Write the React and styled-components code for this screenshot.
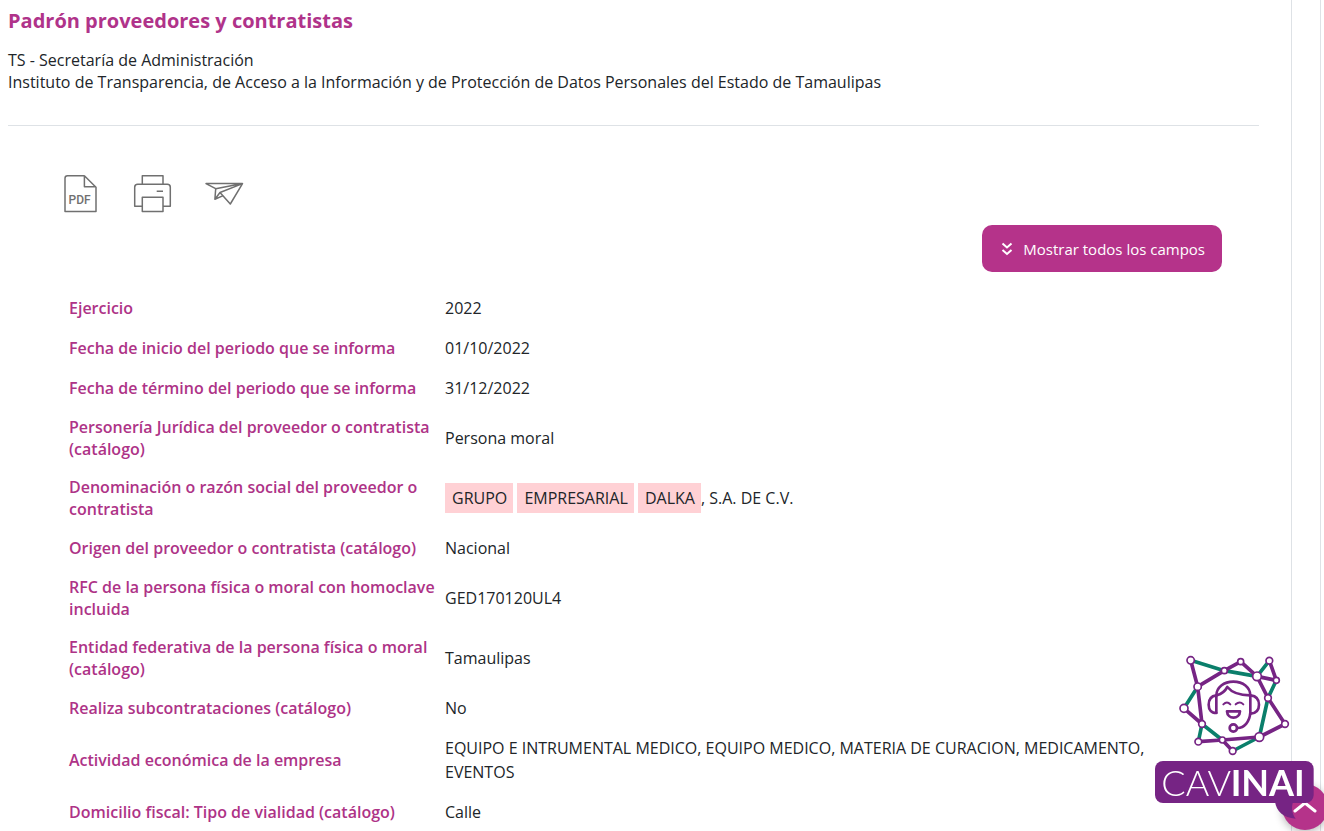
import React from 'react';
import styled, { createGlobalStyle } from 'styled-components';

const magenta = '#b5338a';
const purple = '#762484';
const green = '#0b7f6b';

const GlobalStyle = createGlobalStyle`
  * { box-sizing: border-box; }
  body {
    margin: 0;
    background: #fff;
    color: #212529;
    font: 16px/24px "Open Sans", "Noto Sans", sans-serif;
  }
`;

const Page = styled.div`
  display: flex;
  min-height: 100vh;
  margin-right: 3px;
  padding-right: 28px;
  border-right: 1px solid #dee2e6;
`;

const Content = styled.main`
  flex: 1;
  min-width: 0;
  padding: 9px 32px 0 8px;
  border-right: 1px solid #dee2e6;
`;

const Header = styled.header`
  padding-bottom: 32px;
  border-bottom: 1px solid #dee2e6;
`;

const Title = styled.h1`
  margin: 0 0 16px;
  color: #b0338a;
  font-size: 20px;
  line-height: 24px;
  font-weight: 700;
`;

const Subject = styled.p`
  margin: 0;
  line-height: 22px;
`;

const Detail = styled.section`
  padding: 49px 37px 0 53px;
`;

const Toolbar = styled.div`
  display: flex;
  gap: 34px;
  margin-bottom: 12px;
  padding-left: 1px;
`;

const IconButton = styled.button`
  display: flex;
  width: 38px;
  height: 38px;
  padding: 0;
  border: 0;
  background: none;
  cursor: pointer;

  svg {
    overflow: visible;
    fill: none;
    stroke: #707070;
    stroke-width: 1.5;
    stroke-linejoin: round;
  }

  text {
    fill: #707070;
    stroke: none;
    font: 500 12px Roboto, sans-serif;
  }
`;

const Actions = styled.div`
  display: flex;
  justify-content: flex-end;
  margin-bottom: 16px;
`;

const PrimaryButton = styled.button`
  display: flex;
  align-items: center;
  gap: 8px;
  height: 47px;
  padding: 0 17px;
  border: 0;
  border-radius: 10px;
  background: ${magenta};
  color: #fff;
  font: inherit;
  font-size: 15px;
  cursor: pointer;
`;

const Table = styled.table`
  width: 100%;
  table-layout: fixed;
  border-collapse: collapse;
`;

const Label = styled.th`
  width: 376px;
  padding: 8px 0 8px 8px;
  color: #ae3387;
  font-weight: 600;
  line-height: 22px;
  text-align: left;
  vertical-align: middle;
`;

const Value = styled.td`
  padding: 8px;
  vertical-align: middle;
`;

const Highlight = styled.mark`
  padding: 4px 6px 4px 7px;
  background: #ffd1d5;
  color: inherit;
`;

const ScrollTop = styled.button`
  position: fixed;
  right: -4px;
  bottom: 1px;
  display: grid;
  place-items: center;
  width: 46px;
  height: 46px;
  padding: 0;
  border: 0;
  border-radius: 50%;
  background: ${magenta};
  box-shadow: 0 2px 8px rgba(0, 0, 0, 0.3);
  cursor: pointer;
`;

const ChatLink = styled.a`
  position: fixed;
  right: 0;
  bottom: 0;
  width: 180px;
  height: 186px;

  svg { display: block; }
`;

const PdfIcon = () => (
  <svg width="38" height="38" viewBox="0 0 38 38" aria-hidden="true">
    <path d="M22.4 .8H5.5Q3 .8 3 3.3V36.5H34V12.2L22.4 .8V11.8H34" />
    <text x="6.6" y="29">PDF</text>
  </svg>
);

const PrinterIcon = () => (
  <svg width="38" height="38" viewBox="0 0 38 38" aria-hidden="true">
    <path d="M8.3 9.3V.7H29V9.3" />
    <path d="M8.3 31.3H.7V12.3Q.7 9.3 3.7 9.3H33.3Q36.3 9.3 36.3 12.3V31.3H29" />
    <path d="M8.3 22.3H29V36.6H8.3ZM22.7 16.3H29" />
  </svg>
);

const PlaneIcon = () => (
  <svg width="38" height="38" viewBox="0 0 38 38" aria-hidden="true">
    <path d="M0 8.6H36.5L24.3 29 14 17.5 36.5 8.6 9.7 13.7Z" />
    <path d="M9.7 13.7 8.9 24.2 14 17.5M8.9 24.2 17.2 20.6" />
  </svg>
);

const nodes = {
  A: [140, 46, 11], B: [241, 77, 9], C: [290, 50, 9], D: [339, 94, 13],
  E: [376, 47, 10], F: [397, 106, 9], G: [372, 159, 10], H: [423, 237, 10],
  I: [346, 276, 13], J: [266, 318, 10], K: [235, 285, 9], L: [163, 290, 10],
  M: [174, 237, 10], N: [120, 190, 12], O: [161, 125, 11],
};
const purpleEdges = 'AO OB BC CD EF DF DG GH HI KJ KI LK MO NM'.split(' ');
const greenEdges = 'AB BD DE FG GI IJ LM MK NO'.split(' ');
const edgePath = (edges) =>
  edges
    .map(([a, b]) => `M${nodes[a][0]} ${nodes[a][1]}L${nodes[b][0]} ${nodes[b][1]}`)
    .join('');

const CavinaiLogo = () => (
  <svg width="180" height="186" viewBox="0 0 540 558" aria-hidden="true">
    <path d="M393 470C397 498 418 518 455 521C445 507 441 490 447 470Z" fill={purple} />
    <rect x="33" y="348" width="476" height="126" rx="24" fill={purple} />
    <g fill="none" strokeWidth="11">
      <path d={edgePath(greenEdges)} stroke={green} />
      <path d={edgePath(purpleEdges)} stroke={purple} />
    </g>
    <g fill="#fff" stroke={purple} strokeWidth="5">
      {Object.entries(nodes).map(([id, [x, y, r]]) => (
        <circle key={id} cx={x} cy={y} r={r} />
      ))}
    </g>
    <g fill="none" stroke={purple} strokeWidth="8" strokeLinecap="round" strokeLinejoin="round">
      <path d="M217 203V152C217 127 240 110 268 110C297 110 319 127 319 152V203C317 231 300 249 281 249" />
      <path d="M217 151C201 153 194 164 194 179C194 193 201 204 217 204" />
      <path d="M320 151C337 153 345 164 345 179C345 193 337 204 320 206" />
      <path d="M219 151C232 147 243 139 250 126C264 143 286 151 318 151" />
      <path d="M238 178Q249 167 259 178M275 178Q287 167 298 178" strokeWidth="6" />
      <path d="M249 199H288C287 224 250 224 249 199Z" />
      <circle cx="268" cy="249" r="11" />
    </g>
    <text x="52" y="452" fill="#fff" fontFamily="Lato, sans-serif" fontSize="108" fontWeight="300">CAV</text>
    <text x="260" y="452" fill="#fff" fontFamily="Lato, sans-serif" fontSize="108" fontWeight="700">INAI</text>
  </svg>
);

const records = [
  ['Ejercicio', '2022'],
  ['Fecha de inicio del periodo que se informa', '01/10/2022'],
  ['Fecha de término del periodo que se informa', '31/12/2022'],
  ['Personería Jurídica del proveedor o contratista (catálogo)', 'Persona moral'],
  [
    'Denominación o razón social del proveedor o contratista',
    <>
      <Highlight>GRUPO</Highlight> <Highlight>EMPRESARIAL</Highlight>{' '}
      <Highlight>DALKA</Highlight>, S.A. DE C.V.
    </>,
  ],
  ['Origen del proveedor o contratista (catálogo)', 'Nacional'],
  ['RFC de la persona física o moral con homoclave incluida', 'GED170120UL4'],
  ['Entidad federativa de la persona física o moral (catálogo)', 'Tamaulipas'],
  ['Realiza subcontrataciones (catálogo)', 'No'],
  [
    'Actividad económica de la empresa',
    'EQUIPO E INTRUMENTAL MEDICO, EQUIPO MEDICO, MATERIA DE CURACION, MEDICAMENTO, EVENTOS',
  ],
  ['Domicilio fiscal: Tipo de vialidad (catálogo)', 'Calle'],
];

export default function App() {
  return (
    <>
      <GlobalStyle />
      <Page>
        <Content>
          <Header>
            <Title>Padrón proveedores y contratistas</Title>
            <Subject>TS - Secretaría de Administración</Subject>
            <Subject>
              Instituto de Transparencia, de Acceso a la Información y de Protección de Datos
              Personales del Estado de Tamaulipas
            </Subject>
          </Header>
          <Detail>
            <Toolbar>
              <IconButton type="button" aria-label="Descargar PDF"><PdfIcon /></IconButton>
              <IconButton type="button" aria-label="Imprimir"><PrinterIcon /></IconButton>
              <IconButton type="button" aria-label="Enviar"><PlaneIcon /></IconButton>
            </Toolbar>
            <Actions>
              <PrimaryButton type="button">
                <svg width="16" height="16" viewBox="0 0 16 16" fill="none" stroke="#fff" strokeWidth="2" aria-hidden="true">
                  <path d="M3.5 2.5 8 6.5 12.5 2.5M3.5 9 8 13 12.5 9" />
                </svg>
                Mostrar todos los campos
              </PrimaryButton>
            </Actions>
            <Table>
              <tbody>
                {records.map(([label, value]) => (
                  <tr key={label}>
                    <Label scope="row">{label}</Label>
                    <Value>{value}</Value>
                  </tr>
                ))}
              </tbody>
            </Table>
          </Detail>
        </Content>
      </Page>
      <ScrollTop type="button" aria-label="Volver arriba">
        <svg width="24" height="12" viewBox="0 0 24 12" fill="none" stroke="#fff" strokeWidth="3" strokeLinecap="round" aria-hidden="true">
          <path d="M2 10 12 2 22 10" />
        </svg>
      </ScrollTop>
      <ChatLink href="#cavinai" aria-label="CAVINAI">
        <CavinaiLogo />
      </ChatLink>
    </>
  );
}
